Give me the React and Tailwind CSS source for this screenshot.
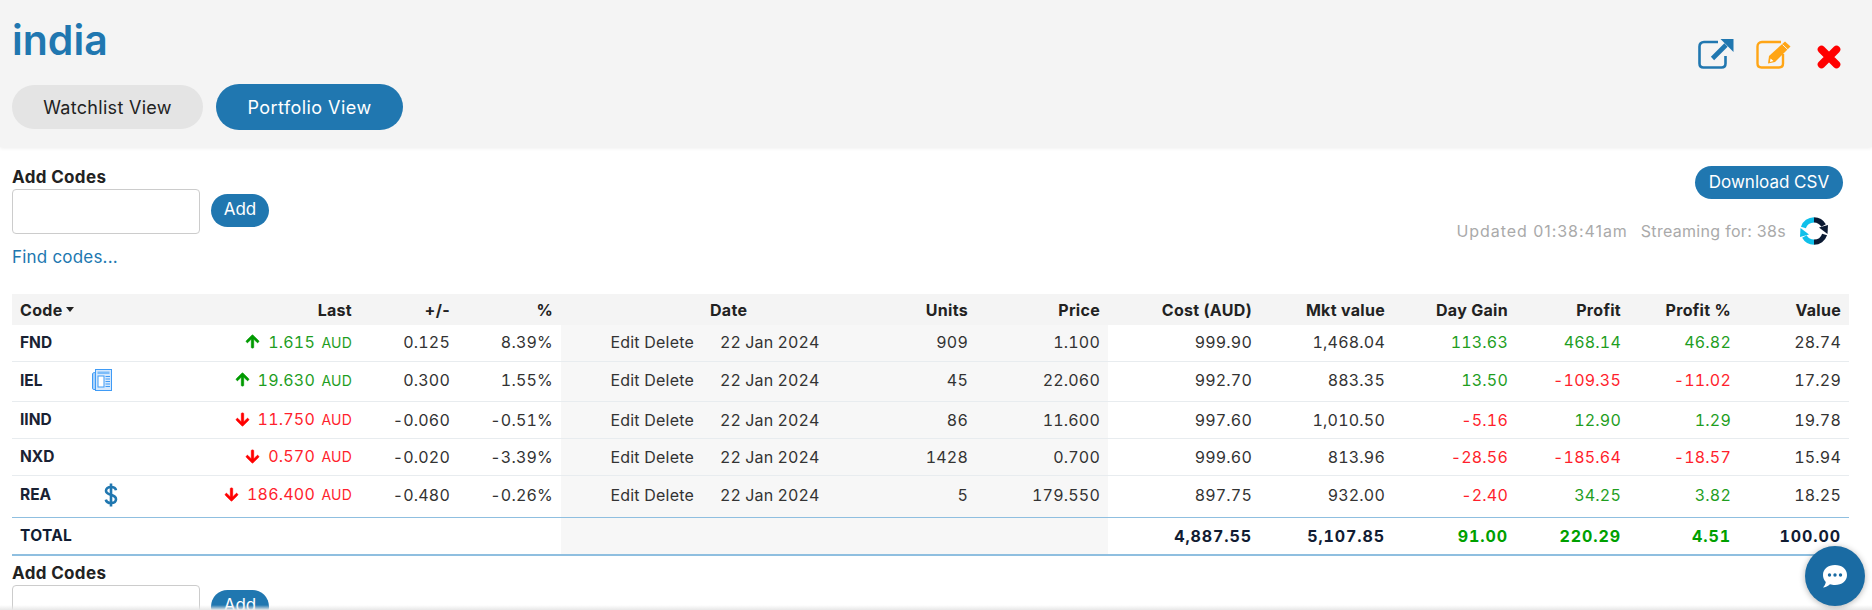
import React from "react";
import { FaArrowUp, FaArrowDown } from "react-icons/fa";

const GREEN = "text-[#1f9e1f]";
const RED = "text-[#ff1f2d]";

const rows = [
  { code: "FND", icon: null, up: true, last: "1.615", chg: "0.125", pct: "8.39%", units: "909", price: "1.100", cost: "999.90", mkt: "1,468.04", day: "113.63", profit: "468.14", ppct: "46.82", value: "28.74", h: "h-[36px] [&>td]:pb-[2px]" },
  { code: "IEL", icon: "news", up: true, last: "19.630", chg: "0.300", pct: "1.55%", units: "45", price: "22.060", cost: "992.70", mkt: "883.35", day: "13.50", profit: "-109.35", ppct: "-11.02", value: "17.29", h: "h-[40px] [&>td]:pb-[2px]" },
  { code: "IIND", icon: null, up: false, last: "11.750", chg: "-0.060", pct: "-0.51%", units: "86", price: "11.600", cost: "997.60", mkt: "1,010.50", day: "-5.16", profit: "12.90", ppct: "1.29", value: "19.78", h: "h-[37px]" },
  { code: "NXD", icon: null, up: false, last: "0.570", chg: "-0.020", pct: "-3.39%", units: "1428", price: "0.700", cost: "999.60", mkt: "813.96", day: "-28.56", profit: "-185.64", ppct: "-18.57", value: "15.94", h: "h-[37px]" },
  { code: "REA", icon: "dollar", up: false, last: "186.400", chg: "-0.480", pct: "-0.26%", units: "5", price: "179.550", cost: "897.75", mkt: "932.00", day: "-2.40", profit: "34.25", ppct: "3.82", value: "18.25", h: "h-[42px] [&>td]:pb-[3px]" },
];

const tone = (v) => (v.startsWith("-") ? RED : GREEN);

function NewsIcon() {
  return (
    <svg width="20" height="24" viewBox="0 0 20 24" fill="none" className="block">
      <path d="M3.5 2.5V21.5H1.8C1 21.5 .5 21 .5 20.2V6C.5 5 1.5 4.5 3.5 4.5" fill="#a9d2fb" stroke="#3f9bf6" />
      <rect x="3.5" y="1.5" width="16" height="21" fill="#d4e8fd" stroke="#3f9bf6" />
      <rect x="5.5" y="3.5" width="12" height="2.5" fill="#7bbcf9" />
      <rect x="6" y="8" width="6" height="11" fill="#fff" stroke="#3f9bf6" />
      <path d="M13.5 8.5H18M13.5 11H18M13.5 13.5H18M13.5 16H18M13.5 18.5H18" stroke="#3f9bf6" />
    </svg>
  );
}

function DollarIcon() {
  return (
    <svg width="14" height="24" viewBox="0 0 14 24" fill="none" className="block">
      <path d="M12 7.2C11.5 5 9.6 4 7 4C4 4 2 5.5 2 7.8C2 13 12 10.6 12 16.2C12 18.6 9.9 20 7 20C4.1 20 2.3 18.8 1.8 16.6" stroke="#2077b0" strokeWidth="2.6" />
      <path d="M7 .5V23.5" stroke="#2077b0" strokeWidth="2.6" />
    </svg>
  );
}

function ExternalIcon() {
  return (
    <svg width="36" height="31" viewBox="0 0 36 31" fill="none" className="block">
      <path d="M20 4H6C3.2 4 1.5 5.8 1.5 8.5V25.5C1.5 28 3.2 29.5 5.5 29.5H23.5C26 29.5 27.5 28 27.5 25.5V18" stroke="#2077b0" strokeWidth="2.6" />
      <path d="M14.5 20.5L28 7" stroke="#2077b0" strokeWidth="4.6" />
      <path d="M22.5 1H35.5V14Z" fill="#2077b0" />
    </svg>
  );
}

function EditIcon() {
  return (
    <svg width="36" height="29" viewBox="0 0 36 29" fill="none" className="block">
      <path d="M25 2H6C3.2 2 1.5 3.8 1.5 6.5V23.5C1.5 26 3.2 27.5 5.5 27.5H23C25.5 27.5 27 26 27 23.5V14" stroke="#ffa515" strokeWidth="2.4" />
      <path d="M13 16L29 1.5L34.5 6.5L19 22L12 23.5Z" fill="#ffa515" />
      <path d="M14.5 18.5L17.5 21L14 22Z" fill="#fff" />
      <path d="M26.6 4.6L31.8 9.6" stroke="#f4f4f4" strokeWidth="1" />
    </svg>
  );
}

function CloseIcon() {
  return (
    <svg width="24" height="24" viewBox="0 0 24 24" fill="none" className="block">
      <path d="M4.5 4.5L19.5 19.5M19.5 4.5L4.5 19.5" stroke="#ff0000" strokeWidth="7.6" strokeLinecap="round" />
    </svg>
  );
}

function SyncIcon() {
  return (
    <svg width="28" height="28" viewBox="0 0 28 28" fill="none" className="block">
      <path d="M14 2.8A11.2 11.2 0 0 0 3.4 10.5" stroke="#10c0ea" strokeWidth="5.2" />
      <path d="M14 25.2A11.2 11.2 0 0 1 4.4 19.5" stroke="#10c0ea" strokeWidth="5.2" />
      <path d="M14 2.8A11.2 11.2 0 0 1 23.6 8.5" stroke="#0b1a33" strokeWidth="5.2" />
      <path d="M14 25.2A11.2 11.2 0 0 0 24.6 17.5" stroke="#0b1a33" strokeWidth="5.2" />
      <path d="M19 10.5L28 8L27.5 17Z" fill="#0b1a33" />
      <path d="M9 17.5L0 20L.5 11Z" fill="#10c0ea" />
    </svg>
  );
}

function ChatIcon() {
  return (
    <svg width="26" height="25" viewBox="0 0 26 25" fill="none" className="block">
      <path d="M13 1C20 1 25 5 25 11C25 17 20 21 13 21C11 21 9.5 20.7 8 20.2C6 22 3.5 23.5 1 23.5C2.5 22 3.5 20 3.8 18C2 16 1 13.6 1 11C1 5 6 1 13 1Z" fill="#fff" />
      <circle cx="7.5" cy="11" r="1.7" fill="#1a6ba3" />
      <circle cx="13" cy="11" r="1.7" fill="#1a6ba3" />
      <circle cx="18.5" cy="11" r="1.7" fill="#1a6ba3" />
    </svg>
  );
}

function AddCodes() {
  return (
    <div>
      <div className="text-[17px] leading-[20px] font-bold tracking-[0.35px] text-[#222]">Add Codes</div>
      <div className="flex items-center gap-[11px] mt-[2px]">
        <input className="w-[188px] h-[45px] bg-white border border-[#ccc] rounded-[4px]" />
        <button className="w-[58px] h-[33px] rounded-full bg-[#2077b0] text-white text-[17px] -mt-[3px]">Add</button>
      </div>
    </div>
  );
}

const th = "px-2 font-bold text-right text-[16px] tracking-[0.3px] text-[#222] bg-[#f4f4f4]";
const td = "px-2 text-right tracking-[0.2px] tabular-nums";
const gray = "bg-[#f7f7f7]";

export default function App() {
  return (
    <div className="relative h-[610px] overflow-hidden bg-white text-[#333] text-[16px] font-['Inter','Liberation_Sans',sans-serif]">
      <header className="h-[147px] bg-[#f4f4f4] shadow-[0_1px_4px_rgba(0,0,0,0.08)] pl-3 pr-[31px] pt-[17px] flex justify-between">
        <div>
          <h1 className="text-[41px] leading-[46px] font-semibold text-[#2077b0]">india</h1>
          <div className="flex items-center gap-[13px] mt-[21px]">
            <button className="w-[191px] h-[44px] rounded-full bg-[#e4e4e4] text-[#222] text-[18px] tracking-[0.3px]">Watchlist View</button>
            <button className="w-[187px] h-[46px] rounded-full bg-[#2077b0] text-white text-[18px] tracking-[0.45px]">Portfolio View</button>
          </div>
        </div>
        <div className="flex items-end h-[52px]">
          <ExternalIcon />
          <div className="ml-[22px]"><EditIcon /></div>
          <div className="ml-[25px]"><CloseIcon /></div>
        </div>
      </header>

      <main className="px-3 pt-[20px]">
        <div className="flex justify-between h-[127px]">
          <div>
            <AddCodes />
            <a className="block mt-[13px] text-[#2077b0] text-[17px] tracking-[0.2px] leading-[20px]">Find codes...</a>
          </div>
          <div className="flex flex-col items-end pr-[17px] -mt-[1px]">
            <button className="w-[148px] h-[33px] rounded-full bg-[#2077b0] text-white text-[17px]">Download CSV</button>
            <div className="flex items-center mt-[18px] pr-[15px] text-[#aaa] text-[16px]">
              <span className="tracking-[0.95px]">Updated 01:38:41am</span>
              <span className="tracking-[0.3px] ml-[13px] mr-[14px]">Streaming for: 38s</span>
              <SyncIcon />
            </div>
          </div>
        </div>

        <table className="table-fixed border-collapse w-[1837px]">
          <colgroup>
            <col className="w-[73px]" /><col className="w-[45px]" /><col className="w-[230px]" /><col className="w-[98px]" /><col className="w-[103px]" />
            <col className="w-[141px]" /><col className="w-[128px]" /><col className="w-[146px]" /><col className="w-[132px]" /><col className="w-[152px]" />
            <col className="w-[133px]" /><col className="w-[123px]" /><col className="w-[113px]" /><col className="w-[110px]" /><col className="w-[110px]" />
          </colgroup>
          <thead>
            <tr className="h-[31px]">
              <th className={th + " !text-left"}>
                <span className="inline-flex items-center gap-[4px]">Code
                  <span className="w-0 h-0 border-x-[4.5px] border-x-transparent border-t-[5px] border-t-[#222]" />
                </span>
              </th>
              <th className={th}></th>
              <th className={th}>Last</th>
              <th className={th}>+/-</th>
              <th className={th}>%</th>
              <th className={th}></th>
              <th className={th + " !text-left"}>Date</th>
              <th className={th}>Units</th>
              <th className={th}>Price</th>
              <th className={th}>Cost (AUD)</th>
              <th className={th}>Mkt value</th>
              <th className={th}>Day Gain</th>
              <th className={th}>Profit</th>
              <th className={th}>Profit %</th>
              <th className={th}>Value</th>
            </tr>
          </thead>
          <tbody>
            {rows.map((r) => (
              <tr key={r.code} className={`${r.h} border-b border-[#e8ecef] last:border-b-0`}>
                <td className="px-2 pt-[1px] font-bold text-[#1a2233] text-[15.5px]">{r.code}</td>
                <td className="px-0">
                  {r.icon === "news" && <div className="ml-[7px]"><NewsIcon /></div>}
                  {r.icon === "dollar" && <div className="ml-[19px]"><DollarIcon /></div>}
                </td>
                <td className={`${td} pt-[1px] ${r.up ? GREEN : RED}`}>
                  <span className="inline-flex items-center justify-end gap-[8px]">
                    {r.up ? <FaArrowUp stroke="currentColor" strokeWidth="24" className="text-[#009a00] text-[15px]" /> : <FaArrowDown stroke="currentColor" strokeWidth="24" className="text-[#ff0000] text-[15px]" />}
                    <span>{r.last} <span className="text-[14px] ml-[2px]">AUD</span></span>
                  </span>
                </td>
                <td className={td}>{r.chg}</td>
                <td className={td}>{r.pct}</td>
                <td className={`${td} ${gray}`}>Edit Delete</td>
                <td className={`px-2 pl-[18px] tracking-[0.1px] tabular-nums ${gray}`}>22 Jan 2024</td>
                <td className={`${td} ${gray}`}>{r.units}</td>
                <td className={`${td} ${gray}`}>{r.price}</td>
                <td className={td}>{r.cost}</td>
                <td className={td}>{r.mkt}</td>
                <td className={`${td} ${tone(r.day)}`}>{r.day}</td>
                <td className={`${td} ${tone(r.profit)}`}>{r.profit}</td>
                <td className={`${td} ${tone(r.ppct)}`}>{r.ppct}</td>
                <td className={td}>{r.value}</td>
              </tr>
            ))}
          </tbody>
          <tfoot>
            <tr className="h-[38px] border-t border-b-2 border-t-[#8fbfe0] border-b-[#8fbfe0] font-bold text-[#111c33]">
              <td className="px-2 text-[15.5px] tracking-[0.3px]" colSpan={5}>TOTAL</td>
              <td className={gray} colSpan={4}></td>
              <td className={`${td} !tracking-[0.9px]`}>4,887.55</td>
              <td className={`${td} !tracking-[0.9px]`}>5,107.85</td>
              <td className={`${td} !tracking-[0.9px] text-[#00a000]`}>91.00</td>
              <td className={`${td} !tracking-[0.9px] text-[#00a000]`}>220.29</td>
              <td className={`${td} !tracking-[0.9px] text-[#00a000]`}>4.51</td>
              <td className={`${td} !tracking-[0.9px]`}>100.00</td>
            </tr>
          </tfoot>
        </table>

        <div className="mt-[7px]"><AddCodes /></div>
      </main>

      <div className="absolute left-0 right-0 bottom-0 h-[5px] bg-gradient-to-b from-transparent to-[#e8e8e8]" />
      <button className="absolute left-[1805px] top-[546px] w-[60px] h-[60px] rounded-full bg-[#1a6ba3] shadow-[0_1px_6px_rgba(0,0,0,0.3)] flex items-center justify-center">
        <ChatIcon />
      </button>
    </div>
  );
}
